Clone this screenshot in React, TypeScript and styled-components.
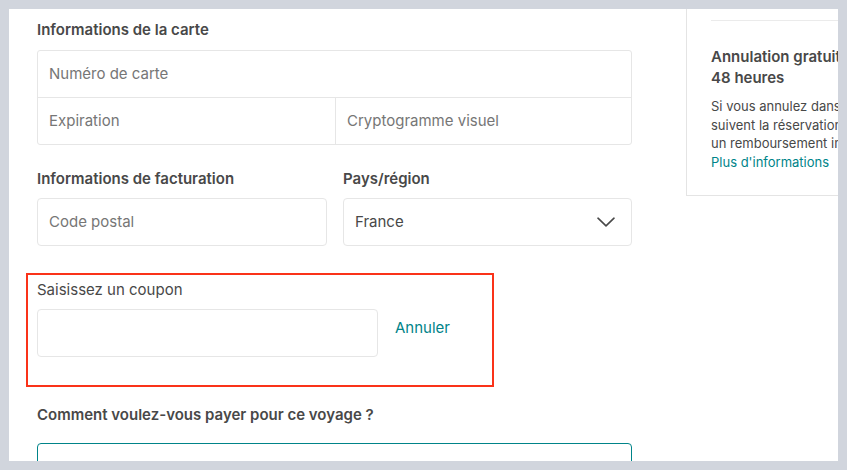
import React from "react";
import styled, { createGlobalStyle } from "styled-components";

const Global = createGlobalStyle`
  html, body { margin: 0; padding: 0; background: #d1d5dd; }
  body { font-family: Inter, "Noto Sans", "Liberation Sans", sans-serif; color: #484848; }
  * { box-sizing: border-box; }
`;

const Frame = styled.div`
  width: 847px;
  height: 470px;
  padding: 9px 9px 9px 9px;
  overflow: hidden;
`;

const Sheet = styled.div`
  width: 829px;
  height: 452px;
  background: #fff;
  overflow: hidden;
  display: flex;
  align-items: flex-start;
`;

const Main = styled.div`
  width: 623px;
  padding: 11px 0 0 28px;
  display: flex;
  flex-direction: column;
`;

const Heading = styled.div<{ $weight?: number }>`
  font-size: 15px;
  line-height: 20px;
  font-weight: ${(p) => p.$weight ?? 600};
  color: #484848;
`;

const CardBox = styled.div`
  margin-top: 10px;
  width: 595px;
  border: 1px solid #e6e6e6;
  border-radius: 3px;
  display: grid;
  grid-template-columns: 297px 1fr;
`;

const Cell = styled.div<{ $full?: boolean; $top?: boolean; $left?: boolean }>`
  grid-column: ${(p) => (p.$full ? "1 / span 2" : "auto")};
  height: ${(p) => (p.$top ? "47px" : "46px")};
  border-top: ${(p) => (p.$top ? "1px solid #e6e6e6" : "none")};
  border-left: ${(p) => (p.$left ? "1px solid #e6e6e6" : "none")};
  display: flex;
  align-items: center;
  padding: 0 0 1px 11px;
  font-size: 15px;
  color: #767676;
`;

const BillingRow = styled.div`
  margin-top: 24px;
  display: grid;
  grid-template-columns: 290px 289px;
  column-gap: 16px;
`;

const Field = styled.div`
  display: flex;
  flex-direction: column;
  gap: 9px;
`;

const Input = styled.div<{ $w?: number; $dark?: boolean }>`
  width: ${(p) => (p.$w ? `${p.$w}px` : "100%")};
  height: 48px;
  border: 1px solid #e6e6e6;
  border-radius: 4px;
  display: flex;
  align-items: center;
  justify-content: space-between;
  padding: 0 16px 1px 11px;
  font-size: 15px;
  color: ${(p) => (p.$dark ? "#484848" : "#767676")};
`;

const Coupon = styled.div`
  margin-top: 27px;
  margin-left: -11px;
  width: 468px;
  height: 114px;
  border: 2px solid #fa3219;
  padding: 5px 0 0 9px;
  display: flex;
  flex-direction: column;
  gap: 9px;
`;

const CouponRow = styled.div`
  display: flex;
  align-items: center;
  gap: 17px;
`;

const Link = styled.span`
  color: #008489;
  font-size: 15px;
  margin-bottom: 11px;
`;

const PayTitle = styled(Heading)`
  margin-top: 18px;
`;

const PayBox = styled.div`
  margin-top: 18px;
  width: 595px;
  height: 40px;
  border: 1px solid #008489;
  border-radius: 4px;
`;

const Side = styled.div`
  margin-left: 54px;
  margin-top: -20px;
  width: 300px;
  flex-shrink: 0;
  border-left: 1px solid #e4e4e4;
  border-bottom: 1px solid #e4e4e4;
  padding: 0 0 23px 24px;
`;

const Divider = styled.div`
  height: 32px;
  border-bottom: 1px solid #ebebeb;
`;

const SideTitle = styled.div`
  margin-top: 25px;
  width: 245px;
  font-size: 15px;
  line-height: 21px;
  font-weight: 600;
  color: #484848;
`;

const SideText = styled.div`
  margin-top: 9px;
  width: 245px;
  font-size: 13px;
  line-height: 18.7px;
  color: #484848;
`;

const SideLink = styled.div`
  color: #008489;
`;

const Chevron = () => (
  <svg width="18" height="10" viewBox="0 0 18 10" fill="none">
    <path d="M1 1.2 L9 8.8 L17 1.2" stroke="#484848" strokeWidth="1.6" strokeLinecap="round" strokeLinejoin="round" />
  </svg>
);

export default function App() {
  return (
    <>
      <Global />
      <Frame>
        <Sheet>
          <Main>
            <Heading>Informations de la carte</Heading>
            <CardBox>
              <Cell $full>Numéro de carte</Cell>
              <Cell $top>Expiration</Cell>
              <Cell $top $left>Cryptogramme visuel</Cell>
            </CardBox>
            <BillingRow>
              <Field>
                <Heading>Informations de facturation</Heading>
                <Input>Code postal</Input>
              </Field>
              <Field>
                <Heading>Pays/région</Heading>
                <Input $dark>
                  France
                  <Chevron />
                </Input>
              </Field>
            </BillingRow>
            <Coupon>
              <Heading $weight={400}>Saisissez un coupon</Heading>
              <CouponRow>
                <Input $w={341} />
                <Link>Annuler</Link>
              </CouponRow>
            </Coupon>
            <PayTitle>Comment voulez-vous payer pour ce voyage ?</PayTitle>
            <PayBox />
          </Main>
          <Side>
            <Divider />
            <SideTitle>Annulation gratuite pendant 48{"\u00a0"}heures</SideTitle>
            <SideText>
              Si vous annulez dans les 48 heures qui suivent la réservation, vous recevrez un{"\u00a0"}remboursement intégral.
              <SideLink>Plus d'informations</SideLink>
            </SideText>
          </Side>
        </Sheet>
      </Frame>
    </>
  );
}
